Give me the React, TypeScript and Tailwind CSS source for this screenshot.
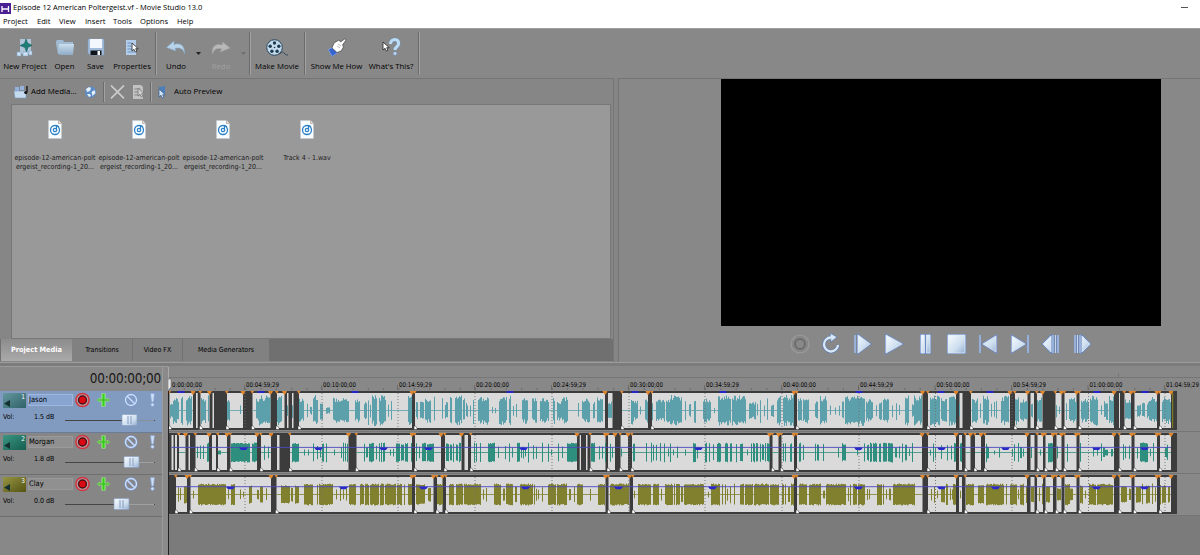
import type { ReactNode } from 'react';

const BEVEL = 'border-[#6b6b6b] shadow-[1px_0_0_#a2a2a2]';

interface Track {
  name: string;
  volume: string;
  knob: number;
  color: string;
  chip: string;
  active: boolean;
  amp: number;
  envelope: number | null;
  points: number[];
  clips: string;
  wave: string;
}

// clips and wave spans are "start-end" in timeline pixels, ":n" overrides the peak height
const tracks: Track[] = [
  {
    name: 'Jason', volume: '1.5 dB', knob: 129, color: '#5ba0ab', chip: 'from-[#65979e] to-[#2f6269]', active: true, amp: 13.5,
    envelope: null,
    points: [181, 261, 355, 510, 635, 723, 859, 941, 990, 1097, 1145],
    clips: '169.5-193 196-197.7 200.5-209.5 212.5-214 227-243 252.5-270.5 277-284.5 287-288.5 292-293.5 299-412 415-605 608-612.5 622-648 652-794 797-922.5 928-956 959.5-962.5 971-1010 1015-1027.5 1030.5-1034 1037-1042.5 1055.5-1061.5 1064.5-1076.5 1079.5-1114 1119-1120 1124.5-1131 1134.5-1157 1160-1171',
    wave: '170-173:8 173-179:12 181-183 186-192 201-206:12 208-209 227-230:10 240-241:5 256-259:11 259-270.5 277-282 287-288:6 292-293:7 299-304:11 307-308:7 310-312:4 313-318:14 320-323:9 326-330:3 333-349:12 355-360:11 364-367:8 368-369 370-371:8 372-377:14 379-386 388-389:6 391-392:12 408-412 416-418:8 420-424:10 425-430:12 430-431:13 434-435 442-443:11 445-448:8 450-452 455-462 463-465:11 466-468:7 470-471:6 473-474 478-489:13 492-493:4 495-496:3 499-507:13 509-511 513-514:6 516-517:7 522-528:12 532-537:11 540-549:11 553-555 557-562:9 562-568:12 578-579:7 582-590:11 593-595:8 597-603:12 608-612:8 631-634 634-638:9 640-641:5 645-648:11 652-653:9 656-665:10 666-670:11 670-682:14 685-686:10 689-691:7 694-696:12 703-711:11 714-715:3 718-731 732-746 749-756:8 757-758:7 760-761 764-765:7 767-768:13 771-774:6 777-781 783-794:14 798-802:11 803-809:12 815-818:9 820-827:13 830-831:6 835-836:4 839-840:5 842-844:9 845-857:13 857-865:14 866-873:10 876-877:6 879-882:9 883-889:11 892-893:6 896-897:9 899-900:5 905-909 912-914:6 914-922 930-940:14 941-947:11 949-956:14 959-960:7 972-978:11 980-981:7 983-989 991-992:7 994-995:8 996-997:10 1001-1004:12 1004-1009:14 1015-1019:13 1020-1028:10 1031-1033:8 1037-1042:12 1056-1057:6 1059-1060:5 1066-1067:10 1069-1077:12 1081-1089:11 1090-1098:14 1101-1102:5 1104-1108:9 1109-1114 1125-1131:10 1137-1141:6 1142-1145:7 1147-1149:8 1149-1157:12 1162-1171:12',
  },
  {
    name: 'Morgan', volume: '1.8 dB', knob: 131, color: '#2f8f7e', chip: 'from-[#3b9784] to-[#155e50]', active: false, amp: 9.5,
    envelope: 447.4,
    points: [244, 319, 384, 429, 524, 699, 859, 942, 1006, 1097, 1145],
    clips: '171.5-173.5 175-177 179-185.5 188.5-190 195.5-209 212-216 218-227 230.5-257 261-271 277-279.5 290-348.5 356.5-412 415-441 445-461.5 464.5-468 471-577 579.7-581 586-587.5 590.5-605.5 608-615 620.5-628 632-769.5 772.5-778.5 781.5-794 797-922 928-956 959-962 965.5-970.5 975-981 985-1027 1030.5-1034.5 1037.5-1043 1045.5-1053 1056.5-1061.5 1064.5-1076.5 1079.5-1114 1119.5-1131.5 1134.5-1157 1160-1171',
    wave: '197-198:6 200-201:7 203-204:7 207-209 218-221:2 231-250 252-257 264-265:8 268-269:6 292-299 304-305:3 308-309:3 313-314 317-318:7 320-321:5 322-324:9 326-327 334-335:3 341-342:6 343-344 345-346 347-348 364-365 366-368:5 369-374 376-377:7 379-380 381-382 383-385 390-391:3 393-394:4 396-400 401-404:8 405-408 411-412 416-417:9 419-420:6 422-426 427-431:9 430-434 446-449:9 450-452:8 453-454 456-458:8 459-461 474-475:10 476-477 480-481 488-495 498-499:6 505-506:7 509-510 512-513:5 517-520 521-522:5 523-524:6 525-526:4 528-529 533-534:7 536-537:6 542-543 548-549 551-552:3 558-559 562-563:6 567-577 591-595 599-600:7 602-603:6 605-606 610-611 612-613:5 621-622:4 633-635 646-647 651-652 653-654:8 656-657:8 660-661 664-665 668-669:4 670-671 673-674:3 677-678:6 685-686:3 693-696 697-698:6 705-707 709-710 713-714:8 717-721 725-728 730-732 736-737 740-743:9 747-748:3 751-752 753-755 756-758 760-761 762-764:8 765-766 767-770 783-784 785-786 790-792:9 799-801 803-804:8 815-816 817-819:8 823-824:9 838-839:5 842-843 843-846:8 857-858:3 864-865 867-869:8 870-872 873-877 879-881 883-887 888-893 895-897:5 899-900:6 902-903 905-907:8 909-910:4 912-913 930-931:3 933-934 935-936:6 941-942:7 947-948:8 951-952:7 954-956 960-962 986-987 987-989:6 994-995:2 999-1000:5 1012-1013:4 1014-1015:9 1018-1019 1020-1022:6 1023-1024:4 1031-1032:6 1040-1041:3 1048-1053 1057-1058:6 1067-1068:9 1080-1081 1093-1094:4 1097-1098:3 1101-1102:9 1103-1105:5 1105-1108:3 1111-1113:4 1123-1124:8 1125-1126:6 1129-1130:7 1137-1138:6 1140-1148 1150-1151:4 1153-1154 1165-1167:5 1167-1168:8',
  },
  {
    name: 'Clay', volume: '0.0 dB', knob: 121, color: '#80802f', chip: 'from-[#979643] to-[#555413]', active: false, amp: 10.5,
    envelope: 486.7,
    points: [231, 344, 424, 526, 619, 713, 859, 942, 996, 1097, 1145],
    clips: '176-187 190.5-271 276.5-412 415-433.5 437-442.5 446-605.5 608.5-629.5 633-794 797-922.5 928-956 959-962 965.5-1027 1030.5-1034.5 1037-1043 1045.5-1053 1056.5-1061.5 1064.5-1076.5 1079.5-1114 1119.5-1131.5 1134.5-1157 1160-1171',
    wave: '178-179:8 180-181:6 184-187:9 193-194:4 198-226 228-229:5 231-235 240-241:5 243-244:3 249-252:9 257-259:5 260-263:8 266-267:6 281-290:9 291-293:7 295-299:9 304-313 317-318 319-333 336-337:5 340-341:7 343-344:5 346-347:6 349-356 360-364 365-369 370-379 380-384 385-396 397-402 404-405 408-412 416-425:10 428-431:7 437-443 449-454 456-463 464-481 483-484:5 486-487:7 494-501 503-505:6 506-513 515-517:8 520-533 534-535 536-537:6 538-539:5 542-543:7 548-556 557-567 569-571:6 574-575:8 577-583 590-591:6 598-605 610-629 634-635:4 638-651 653-659 661-662:6 665-673 674-675 676-680 681-683:8 684-704 708-709:3 711-720 722-723 725-726 727-728:6 730-731:9 734-735 740-744 745-753 754-769 770-779 782-784 785-786 788-790:8 791-794 799-807 809-821 823-825:4 826-846 848-849:7 850-851 853-857 858-865 867-868:6 869-870:5 877-882 883-884 886-887:5 889-891:6 893-915 931-932:6 934-935:8 937-938:4 941-945:8 946-948 950-951:6 953-956 952-953:5 960-961:4 966-974 978-984:9 986-1004 1006-1007 1010-1017 1018-1019:5 1020-1024 1026-1027:9 1031-1034:8 1039-1040:7 1042-1043 1046-1050:8 1057-1061:6 1065-1070 1070-1073:6 1080-1083:9 1085-1086:4 1089-1096 1097-1113 1121-1127:8 1129-1131:6 1136-1141:8 1142-1143 1146-1150:9 1152-1153 1155-1156:8 1160-1161 1162-1166:9 1168-1170:8',
  },
];

const spans = (list: string) =>
  list.split(' ').map((item) => {
    const [range, amp] = item.split(':');
    const [start, end] = range.split('-').map(Number);
    return { start, end, amp: amp ? Number(amp) : null };
  });

const noiseAt = (x: number) => Math.abs(Math.sin(x * 12.9898) * 43758.5453) % 1;

const wavePath = (track: Track, mid: number) =>
  spans(track.wave)
    .map(({ start, end, amp }) => {
      let d = '';
      for (let x = start; x < end; x += 1) {
        const h = amp ?? track.amp;
        const vary = (n: number) => (track.amp > 12 ? 0.7 + n * 0.42 : 0.9 + n * 0.14);
        const w = Math.min(1, end - x);
        d += `M${x} ${(mid - h * vary(noiseAt(x))).toFixed(1)}h${w}V${(mid + h * vary(noiseAt(x + 7))).toFixed(1)}h-${w}z`;
      }
      return d;
    })
    .join('');

const marks = [
  [245, '00:04:59;29'], [322, '00:10:00;00'], [398, '00:14:59;29'], [475, '00:20:00;00'], [552, '00:24:59;29'],
  [629, '00:30:00;00'], [705, '00:34:59;29'], [782, '00:40:00;00'], [859, '00:44:59;29'], [935.5, '00:50:00;00'],
  [1012, '00:54:59;29'], [1088.5, '01:00:00;00'], [1165, '01:04:59;29'],
] as const;

function Gradients() {
  return (
    <svg width="0" height="0" className="absolute">
      <defs>
        <linearGradient id="ice" x1="0" y1="0" x2="1" y2="1">
          <stop offset="0" stopColor="#f7fcff" />
          <stop offset="0.6" stopColor="#cfdfef" />
          <stop offset="1" stopColor="#96afd0" />
        </linearGradient>
        <linearGradient id="folder" x1="0" y1="0" x2="0" y2="1">
          <stop offset="0" stopColor="#cbdfed" />
          <stop offset="1" stopColor="#8eabc6" />
        </linearGradient>
      </defs>
    </svg>
  );
}

function Cursor({ x, y, fill = '#fff', stroke = '#222' }: { x: number; y: number; fill?: string; stroke?: string }) {
  return <path transform={`translate(${x} ${y})`} d="M0 0v8l2-1.7L3.3 9l1.6-.8-1.2-2.5h2.6z" fill={fill} stroke={stroke} strokeWidth=".8" />;
}

function Icon({ children, w = 20, h = 20 }: { children: ReactNode; w?: number; h?: number }) {
  return <svg width={w} height={h} viewBox={`0 0 ${w} ${h}`} className="shrink-0">{children}</svg>;
}

const icons = {
  newProject: (
    <Icon>
      <path d="M5 1h11v15H5z" fill="#b0c6d8" />
      <path d="M2 14h4v4H2zM8 14h5v4H8zM14 13h3v4h-3z" fill="#c9e0f5" stroke="#7f9fc2" strokeWidth=".5" />
      <path d="M11 1l1.500 4L17 7.500l-4 1.800L11.500 14 10 9.500 5 7.500 9.500 5.500z" fill="#1c7f77" stroke="#195e60" strokeWidth=".6" />
    </Icon>
  ),
  open: (
    <Icon>
      <path d="M1 3.500L2 2h6l1 2h9v10l-1 2H3L1 5z" fill="#a1bdd5" />
      <path d="M4 6h15l-1 11H4.500z" fill="url(#folder)" />
    </Icon>
  ),
  save: (
    <Icon>
      <path d="M2 1h16v16H4l-2-2z" fill="#a2bcda" stroke="#7f9cc0" strokeWidth=".6" />
      <path d="M4 1h12v9H4z" fill="#f3f8fc" />
      <path d="M4.500 12.500h11V17h-11z" fill="#10141b" />
      <path d="M11.500 13h2.500v4h-2.500z" fill="#fff" />
    </Icon>
  ),
  properties: (
    <Icon>
      <path d="M4 2h10v15H4z" fill="#b4cdea" />
      <path d="M5.500 5h4M5.500 8h4M5.500 11h5M5.500 14h7" stroke="#6c90ba" />
      <Cursor x={10} y={5} />
    </Icon>
  ),
  undo: (
    <Icon>
      <path d="M.5 9.500L8 3v3.500c7-2.500 11 2 10.500 9.500-1-4.500-4-7-9.500-5.500L10 13z" fill="#b7d3e9" stroke="#83a7c8" strokeWidth=".6" />
    </Icon>
  ),
  redo: (
    <Icon>
      <path d="M19 10l-7.500-6v3C4 5 .5 9 1.500 16 3 11 6 9.500 11 11l-2 3z" fill="#b8b8b8" stroke="#a5a5a5" strokeWidth=".6" />
    </Icon>
  ),
  movie: (
    <Icon w={24}>
      <circle cx="9.500" cy="9.500" r="7.800" fill="#c4dced" stroke="#29485f" strokeWidth="1" />
      {[[9.500, 5], [13.800, 8.200], [12.100, 13.200], [6.900, 13.200], [5.200, 8.200]].map(([cx, cy]) => (
        <circle key={`${cx}-${cy}`} cx={cx} cy={cy} r="1.700" fill="#1f3b50" />
      ))}
      <circle cx="9.500" cy="9.500" r=".8" fill="#1f3b50" />
      <path d="M14 16c3-1 3-3 5-1s2 2 4 2" fill="none" stroke="#354d5e" />
    </Icon>
  ),
  hand: (
    <Icon>
      <path d="M1.500 11.500l5-2.500 4 5.500-5.500 4z" fill="#3866d0" stroke="#7fa4ef" strokeWidth=".7" />
      <path d="M5 10L7 5l5-3 1.500 2L18 .7l1 1.300-3.500 5 1 2-2.500 4-4 1.500z" fill="#fff" stroke="#333" strokeWidth=".6" />
      <path d="M11 6l3 2M10 8l3 2" stroke="#777" strokeWidth=".5" />
    </Icon>
  ),
  help: (
    <Icon>
      <path d="M9.500 6C9.500 0 18.500 0 17.500 6c-.4 3-3.500 3-3.500 6" fill="none" stroke="#6e91ba" strokeWidth="4" />
      <path d="M9.500 6C9.500 0 18.500 0 17.500 6c-.4 3-3.500 3-3.500 6" fill="none" stroke="#bddcf3" strokeWidth="3" />
      <circle cx="14" cy="15.500" r="1.800" fill="#bddcf3" stroke="#6e91ba" strokeWidth=".6" />
      <Cursor x={2} y={4} />
    </Icon>
  ),
};

function Tool({ width, icon, label, disabled }: { width: string; icon: ReactNode; label: string; disabled?: boolean }) {
  return (
    <div className={`flex shrink-0 flex-col items-center ${width} ${disabled ? 'text-[#a0a0a0]' : 'text-black'}`}>
      {icon}
      <span className="mt-[3px] font-['Open_Sans','Noto_Sans',sans-serif] text-[7.8px] leading-[11px] whitespace-nowrap">{label}</span>
    </div>
  );
}

function Separator({ className }: { className: string }) {
  return <div className={`shrink-0 border-l ${BEVEL} ${className}`} />;
}

function Caret({ className }: { className: string }) {
  return <svg width="5" height="3" viewBox="0 0 5 3" className={`mt-3.5 shrink-0 ${className}`}><path d="M0 0h5L2.500 3z" fill="currentColor" /></svg>;
}

function Toolbar() {
  return (
    <div className="flex h-[50px] items-start border-t border-[#a0a0a0] bg-[#888] pt-[9px]">
      <Tool width="w-[50px]" icon={icons.newProject} label="New Project" />
      <Tool width="w-[29px]" icon={icons.open} label="Open" />
      <Tool width="w-[33px]" icon={icons.save} label="Save" />
      <Tool width="w-[40px]" icon={icons.properties} label="Properties" />
      <Separator className="-mt-1.5 ml-[3px] h-[43px]" />
      <Tool width="w-[40px]" icon={icons.undo} label="Undo" />
      <Caret className="text-[#222]" />
      <Tool width="w-[40px]" icon={icons.redo} label="Redo" disabled />
      <Caret className="text-[#6f6f6f]" />
      <Separator className="-mt-1.5 ml-[3px] h-[43px]" />
      <Tool width="w-[54px]" icon={icons.movie} label="Make Movie" />
      <Separator className="-mt-1.5 h-[43px]" />
      <Tool width="w-[63px]" icon={icons.hand} label="Show Me How" />
      <Tool width="w-[46px]" icon={icons.help} label="What's This?" />
      <Separator className="-mt-1.5 ml-1 h-[43px]" />
    </div>
  );
}

function MediaFile({ lines }: { lines: string[] }) {
  return (
    <div className="flex w-[84px] shrink-0 flex-col items-center">
      <svg width="14" height="19" viewBox="0 0 14 19">
        <path d="M.5.5h10l3 3v15H.5z" fill="#f8fcff" stroke="#c5c9cc" strokeWidth=".6" />
        <path d="M10.500.5v3h3" fill="#ddd" stroke="#a98f80" strokeWidth=".6" />
        <circle cx="7" cy="10" r="4.500" fill="none" stroke="#2b80c9" strokeWidth="1.300" />
        <circle cx="7" cy="10" r="1.700" fill="none" stroke="#2b80c9" strokeWidth="1.200" />
        <path d="M8.500 10V5.500l2.500 1" fill="none" stroke="#2b80c9" strokeWidth="1.100" />
      </svg>
      <div className="mt-[15px] text-center text-[7px] leading-[8.500px] whitespace-nowrap text-[#1c1c1c]">
        {lines.map((line) => <div key={line}>{line}</div>)}
      </div>
    </div>
  );
}

function MediaPanel() {
  const recording = ['episode-12-american-polt', 'ergeist_recording-1_20...'];
  return (
    <section className="flex w-[614px] shrink-0 flex-col border-t border-r border-[#767676] bg-[#868686]">
      <div className="flex h-[25px] items-center font-['Open_Sans','Noto_Sans',sans-serif] text-[7.9px] text-black">
        <Icon w={31} h={14}>
          <path d="M15 2h4v4h-4zM20 1h4v4h-4z" fill="#93b2e0" />
          <path d="M14 6h12v7H15z" fill="#c5dbef" stroke="#7c99bd" strokeWidth=".6" />
          <path d="M27 1v6" stroke="#111" strokeWidth="1.300" />
          <circle cx="25.800" cy="7.500" r="1.600" fill="#111" />
        </Icon>
        <span className="w-[52px] whitespace-nowrap">Add Media...</span>
        <Icon w={14} h={14}>
          <circle cx="7.500" cy="7" r="5.500" fill="#5c8dc8" />
          <path d="M3 4l3-2 2 1-1 3-3 1zM8.500 7l3-2 1 3-3 3zM4 9l3 0 1 2-2 1z" fill="#e3f0fa" />
        </Icon>
        <Separator className="ml-[6px] h-5" />
        <Icon w={26} h={16}>
          <path d="M7 2l13 13M20 2L7 15" stroke="#777" strokeWidth="2.500" />
          <path d="M7 1.500l13 13M20 1.500L7 14.500" stroke="#c9c9c9" strokeWidth="1.800" />
        </Icon>
        <Icon w={18} h={16}>
          <path d="M3 1h8l2 2v12H3z" fill="#c2c2c2" />
          <path d="M4.500 5h6M4.500 8h4M4.500 11h6" stroke="#858585" />
          <Cursor x={8} y={4} fill="#d0d0d0" stroke="#777" />
        </Icon>
        <Separator className="ml-[2px] h-5" />
        <Icon w={22} h={16}>
          <path d="M8 3l6-1v8l-5 1z" fill="#4d7ebc" />
          <Cursor x={8} y={5} fill="#d1e5f5" stroke="#3c5f92" />
        </Icon>
        <span className="ml-px">Auto Preview</span>
      </div>
      <div className="mr-[2px] ml-[11px] flex h-[235px] items-start border border-[#777] bg-[#999] pt-[15px] pl-px">
        <MediaFile lines={recording} />
        <MediaFile lines={recording} />
        <MediaFile lines={recording} />
        <MediaFile lines={['Track 4 - 1.wav']} />
      </div>
      <div className="flex h-[22px] bg-[#707070] pl-px text-[7px] text-black">
        <div className="flex w-[71px] items-center justify-center bg-gradient-to-b from-[#8c8c8c] to-[#aaa] text-[7.3px] font-bold text-white">Project Media</div>
        <div className="flex w-[61px] items-center justify-center border-r border-[#717171] bg-[#818181]">Transitions</div>
        <div className="flex w-[50px] items-center justify-center border-r border-[#717171] bg-[#818181]">Video FX</div>
        <div className="flex w-[86px] items-center justify-center bg-[#818181]">Media Generators</div>
      </div>
    </section>
  );
}

// transport shapes share a 20x20 box
const transport = ['M2 1v18M5 1l12 9-12 9z', 'M2 1l16 9-16 9z', 'M5 1h3.500v18H5zM10.500 1H14v18h-3.500z', 'M1 1h17v18H1z', 'M2 1v18M18 2v16L5 10z', 'M2 2l13 8-13 8zM18 1v18', 'M10 2v16L2 10zM12 1v18M14.500 1v18M17 1v18', 'M2 1v18M4.500 1v18M7 1v18M9 2v16l8-8z'];

function Preview() {
  return (
    <section className="ml-1 flex flex-1 flex-col border-t border-l border-[#747474] bg-[#888]">
      <div className="ml-[102px] h-[247px] w-[440px] bg-black" />
      <div className="ml-[170px] flex items-center gap-[7.400px] pt-[7px]">
        <svg width="22" height="22" viewBox="0 0 22 22">
          <circle cx="11" cy="11" r="9" fill="none" stroke="#9c9c9c" strokeWidth="1.200" />
          <circle cx="11" cy="11" r="5" fill="none" stroke="#6c6c6c" strokeWidth="2" />
        </svg>
        <svg width="24" height="22" viewBox="-3 0 24 22">
          <path d="M10 4.500a7 7 0 1 0 7 7.500" fill="none" stroke="#5e7db5" strokeWidth="3.600" />
          <path d="M9 0l7 4-6 5z" fill="#d8e8f4" stroke="#5e7db5" strokeWidth=".8" />
          <path d="M10 4.500a7 7 0 1 0 7 7.500" fill="none" stroke="#d8e8f4" strokeWidth="2.300" />
        </svg>
        {transport.map((d) => (
          <svg key={d} width="24" height="22" viewBox="-2 -1 22 22">
            <path d={d} fill="none" stroke="#6d8cc5" strokeWidth="2.200" />
            <path d={d} fill="url(#ice)" stroke="#dce9f5" strokeWidth=".8" />
          </svg>
        ))}
      </div>
    </section>
  );
}

function TrackHeader({ track, index }: { track: Track; index: number }) {
  return (
    <div className={`flex h-[42px] flex-col border-b pt-px pl-[3px] ${track.active ? 'border-[#6b7c98] bg-[#809bbf]' : 'border-[#6f6f6f] bg-[#868686]'}`}>
      <div className="flex h-4 items-center">
        <div className={`relative h-[15px] w-[23px] bg-gradient-to-br ${track.chip}`}>
          <svg width="23" height="15"><path d="M1 10.500L7 7v7z" fill="#14312f" /></svg>
          <span className="absolute top-0 right-px text-[6.500px] leading-2 text-white">{index + 1}</span>
        </div>
        <div className={`ml-[2px] flex h-3 w-[45px] items-center border text-[7.500px] text-black ${track.active ? 'border-[#a1b8dc] bg-[#88a5d1]' : 'border-[#9a9a9a] bg-[#909090]'}`}>{track.name}</div>
        <svg width="86" height="16" viewBox="0 0 86 16">
          <circle cx="9.500" cy="8" r="6.600" fill="#b9a0a5" stroke="#d33340" strokeWidth="1.500" />
          <circle cx="9.500" cy="8" r="4" fill="#d90a14" stroke="#4b1114" strokeWidth="1.400" />
          <path d="M30.500 1.500v13" stroke="#a5f08a" strokeWidth="4" />
          <path d="M24 8h13M26.500 6v4M34.500 6v4" stroke="#8be070" strokeWidth="1.500" />
          <path d="M30.500 2v12" stroke="#35d01a" strokeWidth="2.200" />
          <path d="M24.500 8h12" stroke="#35b81e" strokeWidth="1" />
          <circle cx="58" cy="8" r="5.500" fill="none" stroke="#7a98d6" strokeWidth="2.300" />
          <path d="M54 4l8 8" stroke="#7a98d6" strokeWidth="2.300" />
          <circle cx="58" cy="8" r="5.500" fill="none" stroke="#cfe0f5" strokeWidth="1.300" />
          <path d="M54 4l8 8" stroke="#cfe0f5" strokeWidth="1.300" />
          <path d="M77.500 1.500h4l-1 8.500h-2z" fill="#cfe0f5" stroke="#86a2d8" strokeWidth=".7" />
          <circle cx="79.500" cy="12.800" r="1.700" fill="#cfe0f5" stroke="#86a2d8" strokeWidth=".7" />
        </svg>
      </div>
      <div className="flex h-6 items-center text-[7px] text-black">
        <span className="w-[31px] -translate-y-[3px]">Vol:</span>
        <span className="w-[30px] -translate-y-[3px] whitespace-nowrap">{track.volume}</span>
        <svg width="94" height="14" viewBox="64 0 94 14">
          <path d="M65 7.500h90" stroke="#464646" />
          <path d={`M${track.knob + 7} 7.500H154`} stroke={track.active ? '#8a9099' : '#a0a0a0'} />
          <rect x={track.knob - 7} y="1.500" width="15" height="11" rx="1" fill="url(#ice)" stroke="#8ba1c3" strokeWidth=".7" />
          <path d={`M${track.knob - 1} 3v8M${track.knob + 2} 3v8`} stroke="#7a91ba" strokeWidth=".9" />
        </svg>
      </div>
    </div>
  );
}

function TrackLane({ track, index }: { track: Track; index: number }) {
  const top = 391 + index * 42;
  const mid = top + 19.500;
  const clips = spans(track.clips);
  return (
    <g>
      <rect x="169" y={top} width="1008" height="39" fill="#3c3c3c" />
      {clips.map((c) => <rect key={c.start} x={c.start} y={top + 2} width={c.end - c.start} height="35" fill="#dadada" />)}
      {clips.filter((c) => c.end - c.start > 4).map((c) => (
        <path key={c.start} d={`M${c.start} ${mid}H${c.end}`} stroke={track.color} strokeWidth=".8" />
      ))}
      <path d={wavePath(track, mid)} fill={track.color} />
      {marks.map(([x]) => <path key={x} d={`M${x} ${top + 2}v35`} stroke="#6f6f6f" strokeWidth=".9" strokeDasharray="1 2" />)}
      {clips.filter((c) => c.end - c.start > 4.500).map((c) => (
        <g key={c.start}>
          <path d={`M${c.end - 2.5} ${top}h5l-1 2-1.500 2-1.500-2zM${c.start - 2} ${top}h3.500l-1.700 3z`} fill="#e0862f" />
          <path d={`M${c.start - 1} ${top + 35}h1.500l1.500 2v1.500h-3z`} fill="#fff" stroke="#333" strokeWidth=".5" />
        </g>
      ))}
      {track.envelope && <path d={`M${clips[0].start} ${track.envelope}H1171`} stroke="#4b48bd" strokeWidth=".9" />}
      {track.points.map((x) =>
        track.envelope ? (
          <path key={x} d={`M${x - 5} ${track.envelope}h9l-2 2.500h-5z`} fill="#2929c9" />
        ) : (
          <rect key={x} x={x - 3.500} y={top} width="7" height="2" fill="#2525c5" />
        ),
      )}
      <path d={`M169 ${top + 40.500}h1031`} stroke="#707070" strokeWidth=".8" />
    </g>
  );
}

function Lanes() {
  return (
    <svg width="1032" height="189" viewBox="168 366 1032 189" fontFamily="'DejaVu Sans Condensed', 'DejaVu Sans', sans-serif" fontSize="6.500">
      <rect x="168" y="366" width="1032" height="189" fill="#888" />
      <rect x="168" y="516" width="1032" height="39" fill="#7b7b7b" />
      <path d="M168 377.500h1032M1118.500 373v5" stroke="#767676" />
      <path d="M168.500 367v23" stroke="#aaa" />
      {Array.from({ length: 66 }, (_, i) => 169 + i * 15.330).map((x) => (
        <path key={x} d={`M${x.toFixed(1)} 388v2`} stroke="#5f5f5f" strokeWidth=".7" />
      ))}
      <text x="172" y="386.500" textLength="30" lengthAdjust="spacingAndGlyphs" fill="#000">0:00:00;00</text>
      {marks.map(([x, label]) => (
        <g key={x}>
          <path d={`M${x - 0.500} 385v5`} stroke="#5f5f5f" strokeWidth=".7" />
          <text x={x + 1} y="386.500" textLength="33" lengthAdjust="spacingAndGlyphs" fill="#000">{label}</text>
        </g>
      ))}
      {tracks.map((track, i) => <TrackLane key={track.name} track={track} index={i} />)}
      <path d="M1172.700 393v35" stroke="#8b8b22" strokeWidth="1" />
      <path d="M168.500 391v164" stroke="#222" />
      <path d="M168 379h3v8l-3 4z" fill="#e8e8e8" stroke="#555" strokeWidth=".5" />
    </svg>
  );
}

function Timeline() {
  return (
    <section className="flex h-[189px] bg-[#888]">
      <div className="w-[163px] shrink-0 border-t border-r border-[#9b9b9b]">
        <div className="flex h-6 items-center justify-end pr-[1px] text-[#161616]">
          <span className="origin-right scale-y-110 text-[13.400px] leading-none tracking-[-0.200px]">00:00:00;00</span>
        </div>
        {tracks.map((track, i) => <TrackHeader key={track.name} track={track} index={i} />)}
      </div>
      <div className="w-[5px] shrink-0 border-t border-[#9b9b9b] bg-[#8a8a8a]" />
      <Lanes />
    </section>
  );
}

export default function App() {
  const menu = [['Project', 'w-[34px]'], ['Edit', 'w-[22px]'], ['View', 'w-[26px]'], ['Insert', 'w-[28px]'], ['Tools', 'w-[27px]'], ['Options', 'w-[37px]'], ['Help', 'w-[20px]']];
  return (
    <div className="h-[555px] w-[1200px] overflow-hidden bg-[#858585] font-['DejaVu_Sans_Condensed','DejaVu_Sans',sans-serif]">
      <Gradients />
      <header className="h-7 bg-white font-['Open_Sans','Noto_Sans',sans-serif] text-[7.600px] text-black">
        <div className="flex h-[14px] items-center pt-px">
          <svg width="11" height="12" viewBox="0 0 11 12">
            <path d="M0 1h11v11H0z" fill="#4b2093" />
            <path d="M2 4v6M8.500 4v6M2 7h6.500" stroke="#fff" strokeWidth="1.300" />
          </svg>
          <span className="ml-[2px] text-[7.500px]">Episode 12 American Poltergeist.vf - Movie Studio 13.0</span>
          <span className="ml-auto mr-3 h-px w-[7px] bg-[#555]" />
        </div>
        <nav className="flex h-[14px] items-center pt-px pl-[3px]">
          {menu.map(([label, width]) => <span key={label} className={width}>{label}</span>)}
        </nav>
      </header>
      <Toolbar />
      <main className="flex h-[284px]">
        <MediaPanel />
        <Preview />
      </main>
      <div className="h-1 border-t border-[#9d9d9d] bg-[#7c7c7c]" />
      <Timeline />
    </div>
  );
}
